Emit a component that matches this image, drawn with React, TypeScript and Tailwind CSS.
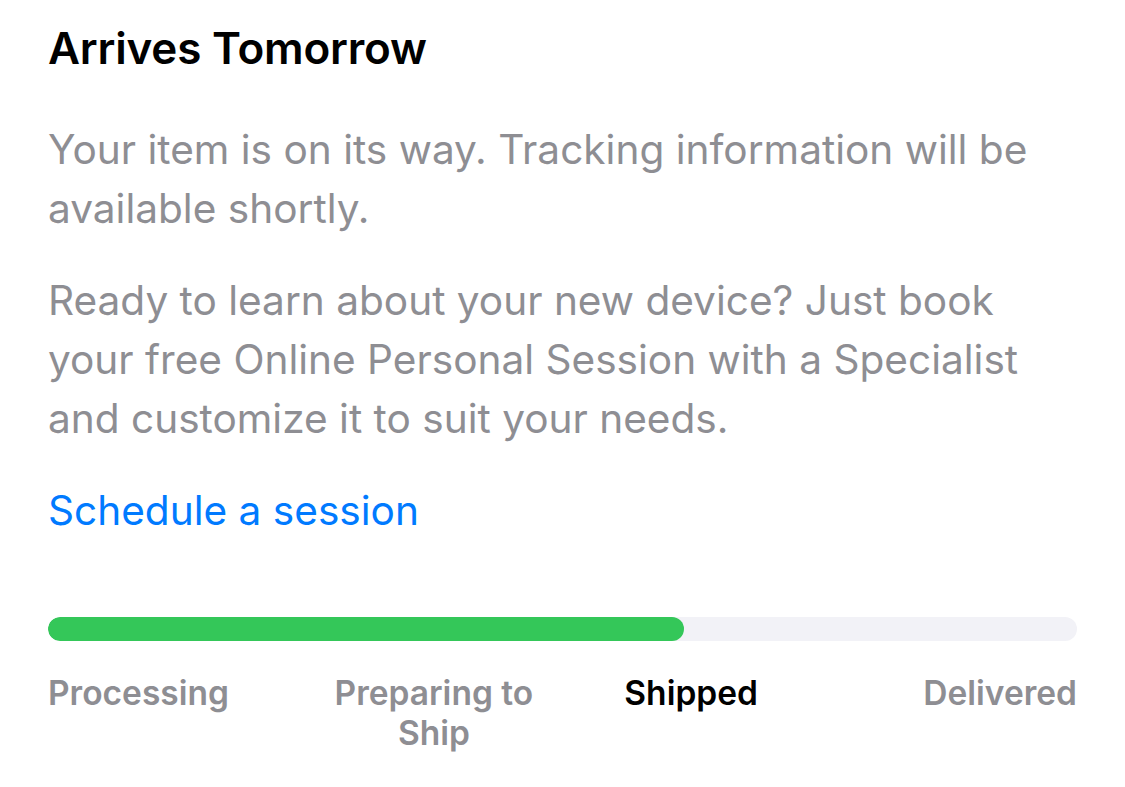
import React from "react";

export default function App() {
  const steps = [
    { label: "Processing", align: "text-left", active: false },
    { label: "Preparing to Ship", align: "text-center", active: false },
    { label: "Shipped", align: "text-center", active: true },
    { label: "Delivered", align: "text-right", active: false },
  ];
  return (
    <div
      className="w-[1125px] h-[787px] bg-white overflow-hidden px-[48px] pt-[20px]"
      style={{ fontFamily: "Inter, 'Noto Sans', sans-serif" }}
    >
      <h1 className="text-[44px] leading-[56px] font-semibold text-black tracking-[-0.2px]">
        Arrives Tomorrow
      </h1>
      <p className="mt-[44px] text-[40.6px] leading-[59px] text-[#8e8e93] w-[1029px]">
        Your item is on its way. Tracking information will be available shortly.
      </p>
      <p className="mt-[33px] text-[40.6px] leading-[59px] text-[#8e8e93] w-[1029px]">
        Ready to learn about your new device? Just book your free Online Personal Session with a Specialist and customize it to suit your needs.
      </p>
      <div className="mt-[33px] text-[40.6px] leading-[59px] text-[#007aff]">Schedule a session</div>
      <div className="mt-[77px] w-[1029px] h-[24px] rounded-full bg-[#f2f2f7] overflow-hidden">
        <div className="h-full w-[636px] rounded-full bg-[#34c759]" />
      </div>
      <div className="mt-[32px] w-[1029px] grid grid-cols-4">
        {steps.map((s) => (
          <div
            key={s.label}
            className={`${s.align} text-[33.5px] leading-[40px] font-semibold ${s.active ? "text-black" : "text-[#8e8e93]"}`}
          >
            {s.label === "Preparing to Ship" ? (
              <>
                Preparing to
                <br />
                Ship
              </>
            ) : (
              s.label
            )}
          </div>
        ))}
      </div>
    </div>
  );
}
